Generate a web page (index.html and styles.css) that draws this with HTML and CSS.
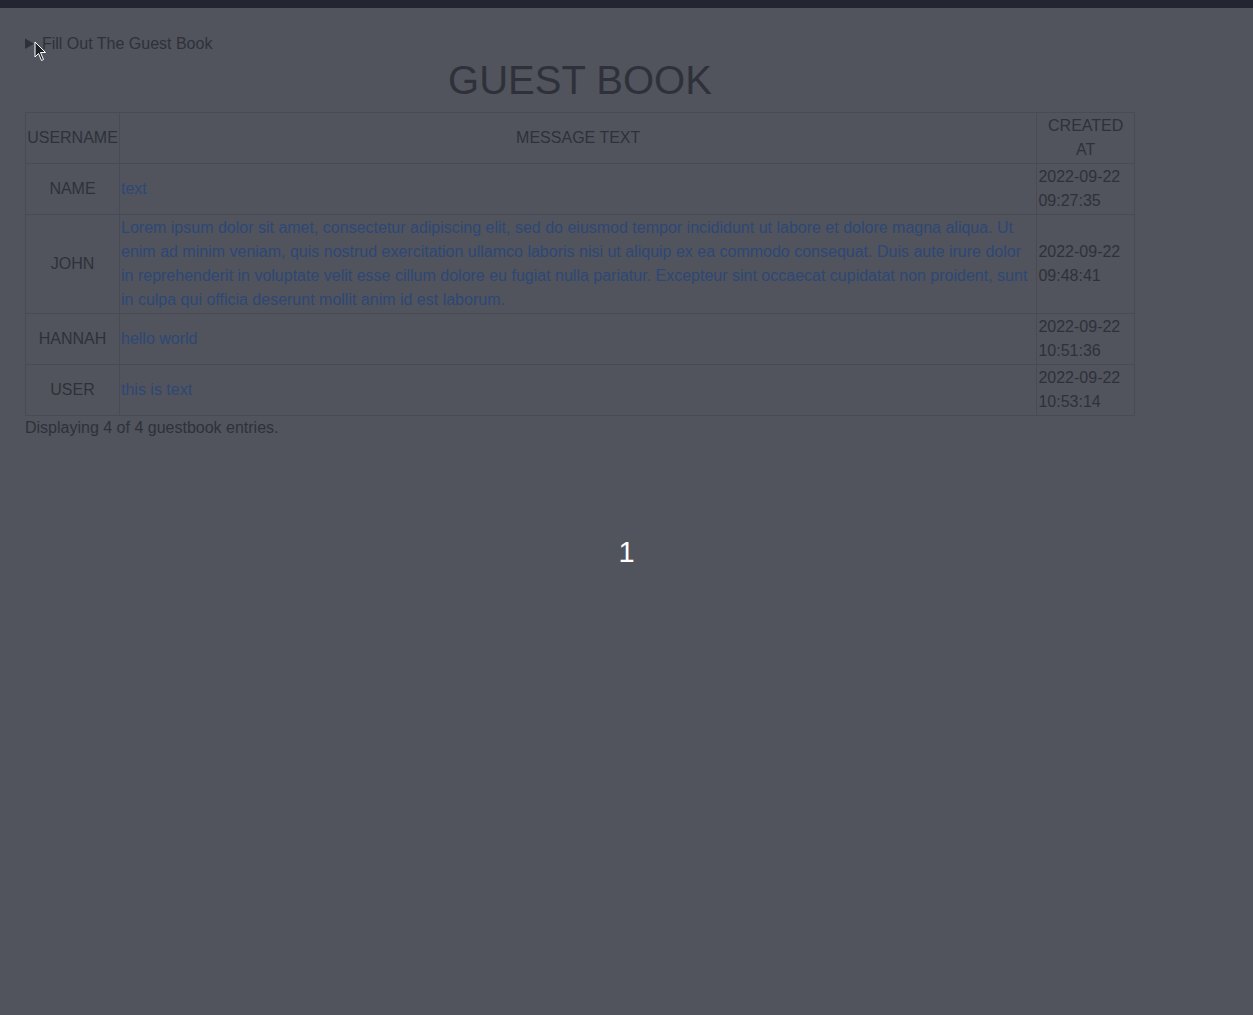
FILE: index.html
```html
<!DOCTYPE html>
<html lang="en">
<head>
<meta charset="utf-8">
<title>Guest Book</title>
<link rel="stylesheet" href="styles.css">
</head>
<body>
<div class="topbar"></div>
<main class="page">
  <details class="form-toggle">
    <summary>Fill Out The Guest Book</summary>
  </details>
  <h1 class="title">GUEST BOOK</h1>
  <table class="entries">
    <thead>
      <tr>
        <th class="col-user">USERNAME</th>
        <th class="col-msg">MESSAGE TEXT</th>
        <th class="col-date">CREATED AT</th>
      </tr>
    </thead>
    <tbody>
      <tr>
        <td class="user">NAME</td>
        <td class="msg"><a href="#">text</a></td>
        <td class="date">2022-09-22 09:27:35</td>
      </tr>
      <tr>
        <td class="user">JOHN</td>
        <td class="msg"><a href="#">Lorem ipsum dolor sit amet, consectetur adipiscing elit, sed do eiusmod tempor incididunt ut labore et dolore magna aliqua. Ut enim ad minim veniam, quis nostrud exercitation ullamco laboris nisi ut aliquip ex ea commodo consequat. Duis aute irure dolor in reprehenderit in voluptate velit esse cillum dolore eu fugiat nulla pariatur. Excepteur sint occaecat cupidatat non proident, sunt in culpa qui officia deserunt mollit anim id est laborum.</a></td>
        <td class="date">2022-09-22 09:48:41</td>
      </tr>
      <tr>
        <td class="user">HANNAH</td>
        <td class="msg"><a href="#">hello world</a></td>
        <td class="date">2022-09-22 10:51:36</td>
      </tr>
      <tr>
        <td class="user">USER</td>
        <td class="msg"><a href="#">this is text</a></td>
        <td class="date">2022-09-22 10:53:14</td>
      </tr>
    </tbody>
  </table>
  <p class="count">Displaying 4 of 4 guestbook entries.</p>
</main>
<div class="counter">1</div>
<svg class="pointer" width="14" height="22" viewBox="0 0 14 22" aria-hidden="true">
  <path d="M1 1 L1 16 L4.5 12.5 L7.5 19.5 L9.5 18.5 L6.5 11.5 L11.5 11.5 Z" fill="#1e2027" stroke="#ffffff" stroke-width="1" stroke-linejoin="round"/>
</svg>
</body>
</html>
```
FILE: styles.css
```css
html, body {
  margin: 0;
  padding: 0;
}
body {
  background: #51545c;
  color: #2e313a;
  font-family: "Liberation Sans", Arial, sans-serif;
  font-size: 16px;
  line-height: 24px;
  min-height: 1015px;
}
.topbar {
  height: 8px;
  background: #232631;
}
.page {
  width: 1110px;
  margin-left: 25px;
  padding-top: 24px;
}
.form-toggle summary {
  cursor: pointer;
  line-height: 24px;
}
.form-toggle summary::marker {
  color: #2e313a;
}
.title {
  margin: 0 0 8px 0;
  font-size: 40px;
  line-height: 48px;
  font-weight: normal;
  text-align: center;
  color: #2e313a;
}
.entries {
  width: 1110px;
  border-collapse: collapse;
  table-layout: fixed;
}
.entries th,
.entries td {
  border: 1px solid #484b53;
  padding: 1px;
  vertical-align: middle;
}
.entries th {
  font-weight: normal;
  text-align: center;
}
.col-user { width: 91px; }
.col-date { width: 94.6px; }
.user {
  text-align: center;
}
.msg {
  text-align: left;
}
.msg a {
  color: #2d4776;
  text-decoration: none;
}
.date {
  text-align: left;
}
.count {
  margin: 0;
}
.counter {
  position: absolute;
  left: 0;
  right: 0;
  top: 538px;
  text-align: center;
  color: #ffffff;
  font-family: "Liberation Sans", Arial, sans-serif;
  font-size: 29px;
  line-height: 29px;
}
.pointer {
  position: absolute;
  left: 34px;
  top: 41px;
}
```
